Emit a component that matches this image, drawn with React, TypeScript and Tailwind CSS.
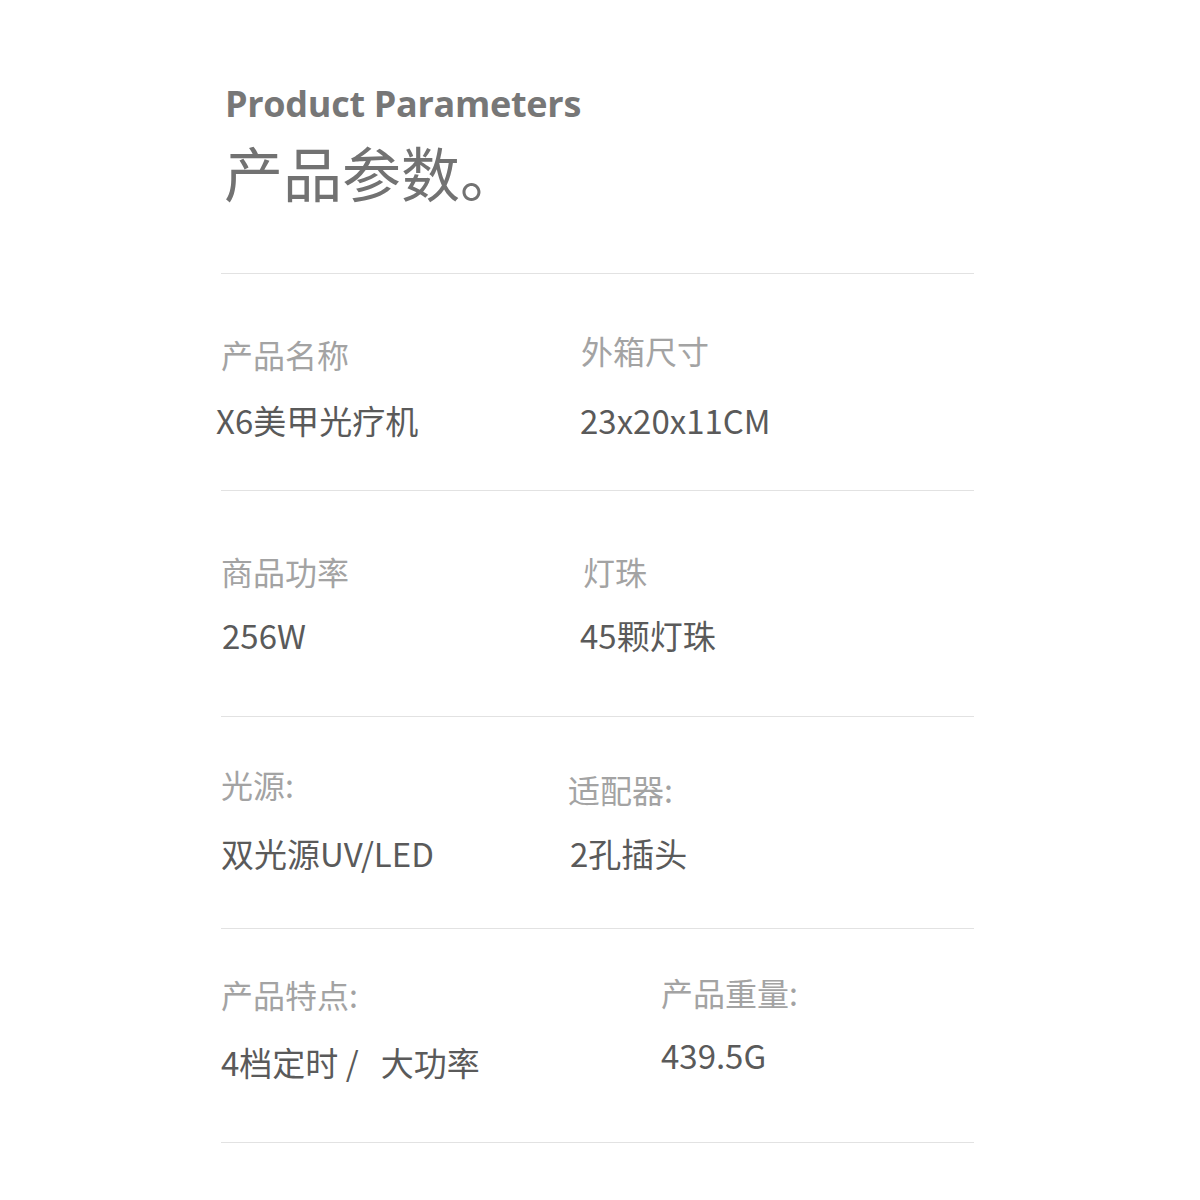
const cjk = "font-['Noto_Sans_CJK_SC','Noto_Sans',sans-serif]";

type Cell = {
  label: string;
  value: string;
  x: string;
  top: string;
  gap: string;
  vx?: string;
};

type Row = { h: string; left: Cell; right: Cell };

const rows: Row[] = [
  {
    h: "h-[217px]",
    left: { label: "产品名称", value: "X6美甲光疗机", x: "w-[360px]", top: "pt-[64px]", gap: "mt-[34px]", vx: "-ml-[5px]" },
    right: { label: "外箱尺寸", value: "23x20x11CM", x: "", top: "pt-[60px]", gap: "mt-[38px]", vx: "-ml-[1px]" },
  },
  {
    h: "h-[226px]",
    left: { label: "商品功率", value: "256W", x: "w-[362px]", top: "pt-[64px]", gap: "mt-[32px]", vx: "ml-[1px]" },
    right: { label: "灯珠", value: "45颗灯珠", x: "", top: "pt-[64px]", gap: "mt-[32px]", vx: "-ml-[3px]" },
  },
  {
    h: "h-[212px]",
    left: { label: "光源:", value: "双光源UV/LED", x: "w-[347px]", top: "pt-[51px]", gap: "mt-[37px]" },
    right: { label: "适配器:", value: "2孔插头", x: "", top: "pt-[56px]", gap: "mt-[32px]", vx: "ml-[2px]" },
  },
  {
    h: "h-[214px]",
    left: { label: "产品特点:", value: "4档定时 /   大功率", x: "w-[440px]", top: "pt-[49px]", gap: "mt-[36px]" },
    right: { label: "产品重量:", value: "439.5G", x: "", top: "pt-[47px]", gap: "mt-[31px]" },
  },
];

function ParamCell({ cell }: { cell: Cell }) {
  return (
    <div className={`flex flex-col ${cell.x} ${cell.top}`}>
      <span className="text-[32px] leading-[32px] text-[#a3a3a3] whitespace-pre">{cell.label}</span>
      <span className={`text-[33px] leading-[33px] text-[#5a5a5a] whitespace-pre ${cell.gap} ${cell.vx ?? ""}`}>
        {cell.value}
      </span>
    </div>
  );
}

export default function App() {
  return (
    <div className={`w-[1200px] h-[1200px] bg-white ${cjk}`}>
      <div className="ml-[221px] w-[753px] pt-[82px]">
        <header className="pl-[4px] h-[191px]">
          <h2 className="font-['Open_Sans',sans-serif] font-bold text-[36px] leading-[44px] text-[#777777] tracking-[-0.3px]">
            Product Parameters
          </h2>
          <h1 className="text-[59px] leading-[70px] text-[#727272] mt-[11px] -ml-[1px]">产品参数。</h1>
        </header>

        {rows.map((row, i) => (
          <section key={i} className={`flex border-t border-[#e2e2e2] ${row.h}`}>
            <ParamCell cell={row.left} />
            <ParamCell cell={row.right} />
          </section>
        ))}
        <div className="border-t border-[#e2e2e2]" />
      </div>
    </div>
  );
}
